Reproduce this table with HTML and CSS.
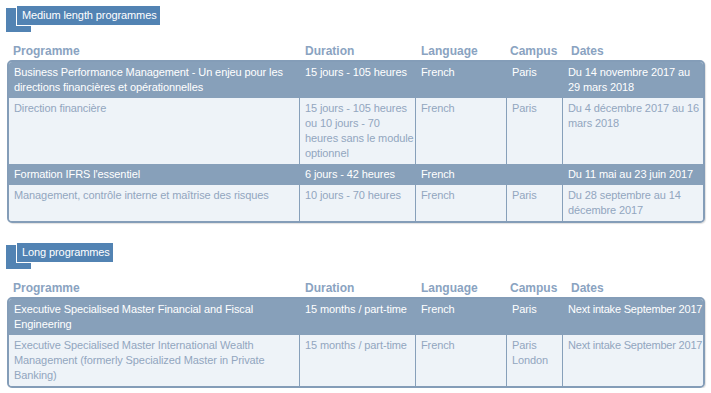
FILE: index.html
```html
<!DOCTYPE html>
<html lang="fr">
<head>
<meta charset="utf-8">
<title>Programmes</title>
<link rel="stylesheet" href="styles.css">
</head>
<body>
<section class="section">
  <div class="badge"><span class="badge-label">Medium length programmes</span></div>
  <div class="head row">
    <div class="hc hc-prog">Programme</div>
    <div class="hc">Duration</div>
    <div class="hc">Language</div>
    <div class="hc hc-campus">Campus</div>
    <div class="hc hc-dates">Dates</div>
  </div>
  <div class="table">
    <div class="row dark">
      <div class="c">Business Performance Management - Un enjeu pour les directions financières et opérationnelles</div>
      <div class="c">15 jours - 105 heures</div>
      <div class="c">French</div>
      <div class="c">Paris</div>
      <div class="c">Du 14 novembre 2017 au 29 mars 2018</div>
    </div>
    <div class="row light">
      <div class="c">Direction financière</div>
      <div class="c">15 jours - 105 heures ou 10 jours - 70 heures sans le module optionnel</div>
      <div class="c">French</div>
      <div class="c">Paris</div>
      <div class="c">Du 4 décembre 2017 au 16 mars 2018</div>
    </div>
    <div class="row dark">
      <div class="c">Formation IFRS l'essentiel</div>
      <div class="c">6 jours - 42 heures</div>
      <div class="c">French</div>
      <div class="c"></div>
      <div class="c">Du 11 mai au 23 juin 2017</div>
    </div>
    <div class="row light">
      <div class="c">Management, contrôle interne et maîtrise des risques</div>
      <div class="c">10 jours - 70 heures</div>
      <div class="c">French</div>
      <div class="c">Paris</div>
      <div class="c">Du 28 septembre au 14 décembre 2017</div>
    </div>
  </div>
</section>

<section class="section section-2">
  <div class="badge"><span class="badge-label">Long programmes</span></div>
  <div class="head row">
    <div class="hc hc-prog">Programme</div>
    <div class="hc">Duration</div>
    <div class="hc">Language</div>
    <div class="hc hc-campus">Campus</div>
    <div class="hc hc-dates">Dates</div>
  </div>
  <div class="table">
    <div class="row dark">
      <div class="c">Executive Specialised Master Financial and Fiscal Engineering</div>
      <div class="c">15 months / part-time</div>
      <div class="c">French</div>
      <div class="c">Paris</div>
      <div class="c nowrap">Next intake September 2017</div>
    </div>
    <div class="row light">
      <div class="c">Executive Specialised Master International Wealth Management (formerly Specialized Master in Private Banking)</div>
      <div class="c">15 months / part-time</div>
      <div class="c">French</div>
      <div class="c">Paris<br>London</div>
      <div class="c nowrap">Next intake September 2017</div>
    </div>
  </div>
</section>
</body>
</html>
```

FILE: styles.css
```css
html, body {
  margin: 0;
  padding: 0;
  background: #ffffff;
}

body {
  font-family: "Liberation Sans", Arial, sans-serif;
  font-size: 12px;
  line-height: 15px;
  color: #92a6bf;
}

.section-2 {
  margin-top: 14px;
}

.badge {
  position: relative;
  height: 32px;
}

.badge::before {
  content: "";
  position: absolute;
  left: 6px;
  top: 8px;
  width: 25px;
  height: 24px;
  background: #5283b3;
}

.badge-label {
  position: relative;
  display: inline-block;
  margin-left: 16px;
  margin-top: 5px;
  padding: 0 3px 0 5px;
  height: 19px;
  line-height: 19px;
  border: 1px solid #ffffff;
  background: #5283b3;
  color: #ffffff;
  font-size: 11px;
  letter-spacing: -0.1px;
}

.row {
  display: grid;
  grid-template-columns: 290px 116px 91px 56px 1fr;
}

.head {
  margin-left: 9px;
  width: 694px;
  padding: 12px 0 1px 0;
}

.hc {
  font-weight: bold;
  color: #8aa3c1;
  padding-left: 6px;
  white-space: nowrap;
}

.hc-prog {
  padding-left: 4px;
}

.hc-campus {
  padding-left: 4px;
}

.hc-dates {
  padding-left: 9px;
}

.table {
  margin-left: 7px;
  width: 694px;
  border: 2px solid #849db8;
  border-radius: 5px;
  overflow: hidden;
  background: #eef3f8;
  box-shadow: 1px 1px 1px rgba(0, 0, 0, 0.12);
  font-size: 11px;
  letter-spacing: -0.1px;
}

.c {
  padding: 3px 0 3px 5px;
  border-left: 1px solid #87a0ba;
}

.c:first-child {
  border-left: none;
  padding-left: 5px;
  padding-right: 2px;
}

.nowrap {
  white-space: nowrap;
  letter-spacing: -0.2px;
}

.dark {
  background: #87a0ba;
  color: #ffffff;
}

.dark .c {
  border-left-color: transparent;
}

.light {
  background: #eef3f8;
  color: #92a6bf;
}
```
